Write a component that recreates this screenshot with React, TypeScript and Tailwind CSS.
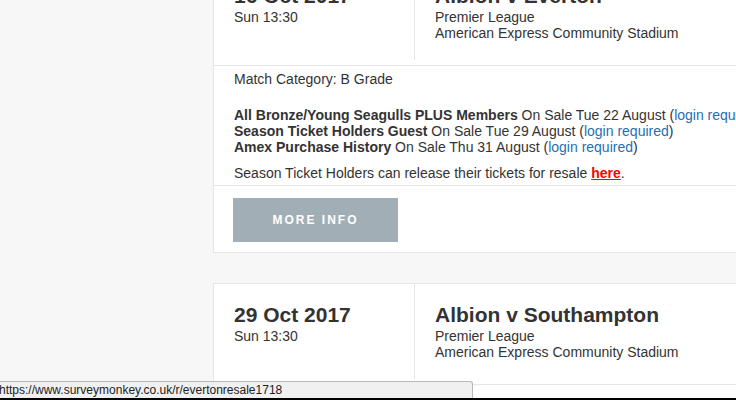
import React from 'react'

type Fixture = {
  date: string
  time: string
  title: string
  competition: string
  venue: string
}

function FixtureHeader({ f }: { f: Fixture }) {
  return (
    <div className="flex pb-[5px]">
      <div className="w-[201px] shrink-0 border-r border-[#e6e6e6] pl-[20px] pt-[19px]">
        <div className="text-[21px] leading-[24px] font-bold text-[#333]">{f.date}</div>
        <div className="text-[14px] leading-[16px] text-[#333] mt-[1px]">{f.time}</div>
      </div>
      <div className="pl-[20px] pt-[19px] pb-[19px]">
        <div className="text-[21px] leading-[24px] font-bold text-[#333] whitespace-nowrap">{f.title}</div>
        <div className="text-[14px] leading-[16px] text-[#333] mt-[1px]">{f.competition}</div>
        <div className="text-[14px] leading-[16px] text-[#333]">{f.venue}</div>
      </div>
    </div>
  )
}

function Login() {
  return (
    <>
      (<a className="text-[#1f6fb2]">login required</a>)
    </>
  )
}

export default function App() {
  const everton: Fixture = {
    date: '16 Oct 2017',
    time: 'Sun 13:30',
    title: 'Albion v Everton',
    competition: 'Premier League',
    venue: 'American Express Community Stadium',
  }
  const southampton: Fixture = {
    date: '29 Oct 2017',
    time: 'Sun 13:30',
    title: 'Albion v Southampton',
    competition: 'Premier League',
    venue: 'American Express Community Stadium',
  }

  return (
    <div
      className="relative w-[736px] h-[400px] overflow-hidden bg-[#f7f7f7] text-[#333]"
      style={{ fontFamily: '"Liberation Sans", Arial, sans-serif' }}
    >
      <div className="ml-[213px] w-[600px] -mt-[36px]">
        {/* first fixture */}
        <div className="bg-white border border-[#e6e6e6]">
          <FixtureHeader f={everton} />
          <div className="border-t border-[#e6e6e6] px-[20px] pt-[5px] pb-[4px] text-[14px] leading-[16px]">
            <p>Match Category: B Grade</p>
            <div className="mt-[20px] whitespace-nowrap">
              <p>
                <b>All Bronze/Young Seagulls PLUS Members</b> On Sale Tue 22 August <Login />
              </p>
              <p>
                <b>Season Ticket Holders Guest</b> On Sale Tue 29 August <Login />
              </p>
              <p>
                <b>Amex Purchase History</b> On Sale Thu 31 August <Login />
              </p>
            </div>
            <p className="mt-[10px] whitespace-nowrap">
              Season Ticket Holders can release their tickets for resale{' '}
              <a className="font-bold text-[#ff0000] underline">here</a>.
            </p>
          </div>
          <div className="border-t border-[#e6e6e6] pl-[19px] pt-[12px] pb-[10px]">
            <button className="w-[165px] h-[44px] bg-[#a1aeb5] text-white text-[12px] font-bold tracking-[2px]">
              MORE INFO
            </button>
          </div>
        </div>

        {/* second fixture */}
        <div className="mt-[30px] bg-white border border-[#e6e6e6]">
          <FixtureHeader f={southampton} />
          <div className="border-t border-[#e6e6e6] h-[40px]" />
        </div>
      </div>

      {/* browser status bubble */}
      <div className="absolute left-0 bottom-[2px] w-[473px] h-[17px] bg-[#f0f0f0] border-t border-r border-[#b8b8b8] rounded-tr-[3px] overflow-hidden">
        <div className="-ml-[1px] text-[12px] leading-[16px] text-[#222] whitespace-nowrap">
          https://www.surveymonkey.co.uk/r/evertonresale1718
        </div>
      </div>
      <div className="absolute left-0 right-0 bottom-0 h-[2px] bg-black" />
    </div>
  )
}
